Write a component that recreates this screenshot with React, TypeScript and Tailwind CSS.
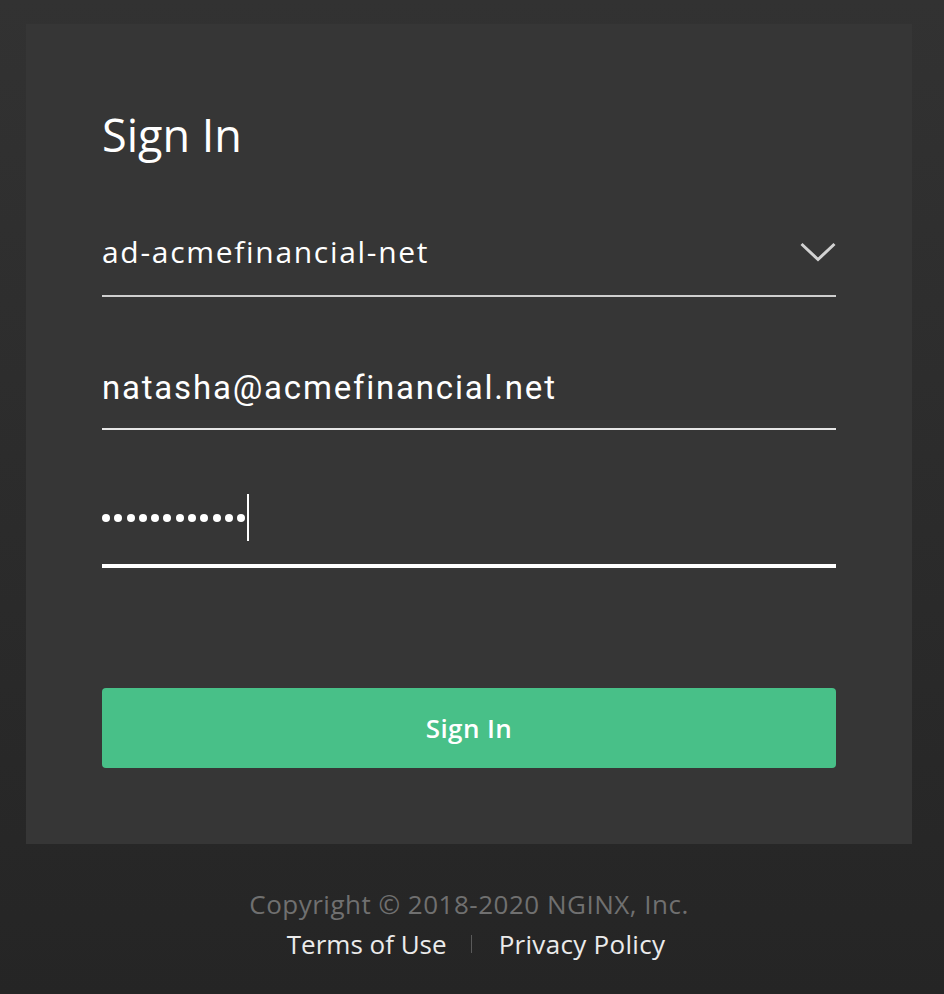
import React from "react";

const SANS = "font-['Open_Sans',sans-serif]";

function Chevron() {
  return (
    <svg width="36" height="20" viewBox="0 0 36 20" fill="none" aria-hidden="true">
      <polyline points="1.5,2 18,17.5 34.5,2" stroke="#d2d2d2" strokeWidth="3" />
    </svg>
  );
}

export default function App() {
  const dots = Array.from({ length: 12 });

  return (
    <div className={`min-h-screen bg-gradient-to-b from-[#323232] to-[#252525] pl-[26px] pr-[32px] pt-[24px] ${SANS}`}>
      <div className="bg-[#363636] px-[76px] pt-[88px] pb-[76px]">
        <h1 className="text-[45px] leading-none font-normal text-white">Sign In</h1>

        {/* tenant select */}
        <div className="mt-[80px] flex items-center justify-between border-b-2 border-[#cfcfcf] pb-[28px]">
          <span className="text-[30px] leading-none tracking-[1.7px] text-white">ad-acmefinancial-net</span>
          <Chevron />
        </div>

        {/* email */}
        <div className="mt-[74px] border-b-2 border-[#e6e6e6] pb-[23px]">
          <span className="font-['Roboto',sans-serif] text-[33px] leading-none tracking-[1.8px] text-white">
            natasha@acmefinancial.net
          </span>
        </div>

        {/* password, focused */}
        <div className="mt-[64px] flex items-center border-b-4 border-white pb-[23px]">
          <div className="flex gap-[4.3px]">
            {dots.map((_, i) => (
              <div key={i} className="h-[8px] w-[8px] rounded-full bg-white" />
            ))}
          </div>
          <div className="ml-[2px] h-[47px] w-[2px] bg-white" />
        </div>

        <button className="mt-[120px] flex h-[80px] w-full items-center justify-center rounded-[4px] bg-[#48c088] text-[26px] tracking-[0.4px] font-semibold text-white">
          Sign In
        </button>
      </div>

      <div className="mt-[40px] flex flex-col items-center text-[26px] leading-[40px]">
        <p className="tracking-[0.5px] text-[#707070]">Copyright © 2018-2020 NGINX, Inc.</p>
        <div className="flex items-center pl-[14px] text-[#ebebeb]">
          <a>Terms of Use</a>
          <span className="ml-[24px] mr-[27px] h-[18px] w-px bg-[#5a5a5a]" />
          <a className="tracking-[0.3px]">Privacy Policy</a>
        </div>
      </div>
    </div>
  );
}
